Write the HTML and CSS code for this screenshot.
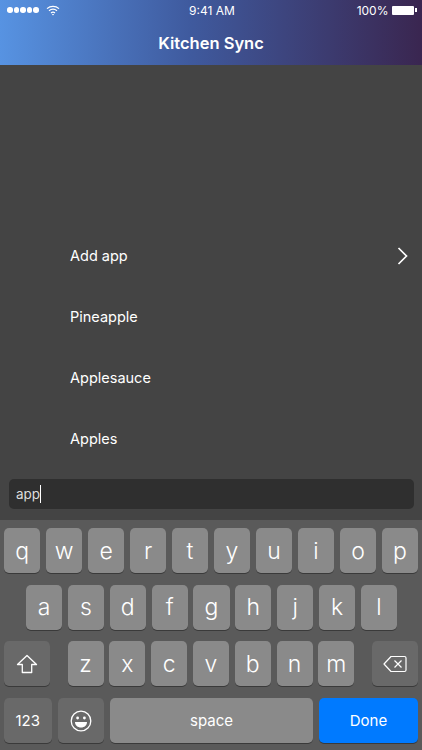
FILE: index.html
```html
<!DOCTYPE html>
<html lang="en">
<head>
  <meta charset="UTF-8">
  <meta name="viewport" content="width=device-width, initial-scale=1.0">
  <title>Kitchen Sync</title>
  <link rel="stylesheet" href="styles.css">
</head>
<body>
  <div class="app">
    <!-- Header -->
    <header class="header">
      <div class="status-bar">
        <div class="status-left">
          <span class="signal"><i></i><i></i><i></i><i></i><i></i></span>
          <svg class="wifi" width="14" height="11" viewBox="0 0 14 11" fill="none" stroke="#fff" stroke-width="1.2">
            <path d="M1 3.6C4.4 .6 9.6 .6 13 3.6"/>
            <path d="M3 5.8C5.3 3.9 8.7 3.9 11 5.8"/>
            <path d="M5 7.9C6.2 7 7.8 7 9 7.9"/>
            <path d="M7 10.6L5.9 9.3C6.6 8.9 7.4 8.9 8.1 9.3Z" fill="#fff" stroke="none"/>
          </svg>
        </div>
        <div class="clock">9:41 AM</div>
        <div class="status-right">
          <span>100%</span>
          <span class="battery"></span>
          <span class="battery-tip"></span>
        </div>
      </div>
      <div class="title">Kitchen Sync</div>
    </header>

    <!-- Suggestions -->
    <main class="suggestions">
      <div class="suggestion">
        <span>Add app</span>
        <svg class="chevron" width="11" height="18" viewBox="0 0 11 18" fill="none" stroke="#fff" stroke-width="1.7">
          <path d="M1.5 1L9.5 9L1.5 17"/>
        </svg>
      </div>
      <div class="suggestion"><span>Pineapple</span></div>
      <div class="suggestion"><span>Applesauce</span></div>
      <div class="suggestion"><span>Apples</span></div>
    </main>

    <!-- Search box -->
    <div class="input-bar">
      <div class="input"><span>app</span><span class="caret"></span></div>
    </div>

    <!-- Keyboard -->
    <div class="keyboard">
      <div class="key-row">
        <div class="key">q</div><div class="key">w</div><div class="key">e</div><div class="key">r</div><div class="key">t</div>
        <div class="key">y</div><div class="key">u</div><div class="key">i</div><div class="key">o</div><div class="key">p</div>
      </div>
      <div class="key-row row-middle">
        <div class="key">a</div><div class="key">s</div><div class="key">d</div><div class="key">f</div><div class="key">g</div>
        <div class="key">h</div><div class="key">j</div><div class="key">k</div><div class="key">l</div>
      </div>
      <div class="key-row row-third">
        <div class="key key-dark key-side">
          <svg width="22" height="20" viewBox="0 0 22 20" fill="none" stroke="#fff" stroke-width="1.3" stroke-linejoin="round">
            <path d="M11 1.5L20.5 10.5H15.7V18.5H6.3V10.5H1.5Z"/>
          </svg>
        </div>
        <div class="letters">
          <div class="key">z</div><div class="key">x</div><div class="key">c</div><div class="key">v</div>
          <div class="key">b</div><div class="key">n</div><div class="key">m</div>
        </div>
        <div class="key key-dark key-side">
          <svg width="24" height="18" viewBox="0 0 24 18" fill="none" stroke="#fff" stroke-width="1.2" stroke-linejoin="round">
            <path d="M8 1.5H21.5C22.3 1.5 23 2.2 23 3V15C23 15.8 22.3 16.5 21.5 16.5H8L1 9Z"/>
            <path d="M11.5 5.5L18.5 12.5M18.5 5.5L11.5 12.5"/>
          </svg>
        </div>
      </div>
      <div class="key-row row-bottom">
        <div class="key key-dark key-num">123</div>
        <div class="key key-dark key-emoji">
          <svg width="22" height="22" viewBox="0 0 22 22" fill="none" stroke="#fff" stroke-width="1.3">
            <circle cx="11" cy="11" r="9.8"/>
            <circle cx="7.6" cy="8" r="1.4" fill="#fff" stroke="none"/>
            <circle cx="14.4" cy="8" r="1.4" fill="#fff" stroke="none"/>
            <path d="M5 12H17C17 15.4 14.4 17.5 11 17.5C7.6 17.5 5 15.4 5 12Z" fill="#fff" stroke="none"/>
          </svg>
        </div>
        <div class="key key-space">space</div>
        <div class="key key-done">Done</div>
      </div>
    </div>
  </div>
</body>
</html>
```

FILE: styles.css
```css
/* General Styling */
body {
  margin: 0;
  padding: 0;
  font-family: Inter, 'Liberation Sans', sans-serif;
  color: #fff;
  background: #444444;
}

.app {
  width: 422px;
  height: 750px;
  display: flex;
  flex-direction: column;
  overflow: hidden;
}

/* Header */
.header {
  height: 65px;
  flex-shrink: 0;
  background: linear-gradient(90deg, #5793e2, #3f5a9e 45%, #3a2650);
}

.status-bar {
  height: 20px;
  padding: 0 5px 0 7px;
  display: flex;
  align-items: center;
  justify-content: space-between;
  font-size: 12px;
}

.status-left {
  width: 120px;
  display: flex;
  align-items: center;
  gap: 7px;
}

.signal {
  display: flex;
  gap: 1px;
}

.signal i {
  width: 5.5px;
  height: 5.5px;
  border-radius: 50%;
  background: #fff;
}

.status-right {
  width: 120px;
  display: flex;
  align-items: center;
  justify-content: flex-end;
}

.battery {
  width: 22px;
  height: 9px;
  margin-left: 4px;
  border-radius: 1px;
  background: #fff;
}

.battery-tip {
  width: 1.5px;
  height: 4px;
  margin-left: 1px;
  background: #fff;
}

.title {
  margin-top: 13px;
  text-align: center;
  font-size: 16.5px;
  font-weight: 600;
}

/* Suggestions */
.suggestions {
  flex: 1;
  display: flex;
  flex-direction: column;
  justify-content: flex-end;
}

.suggestion {
  height: 61px;
  padding: 0 14px 0 70px;
  display: flex;
  align-items: center;
  justify-content: space-between;
  font-size: 14.5px;
}

/* Search box */
.input-bar {
  height: 51px;
  flex-shrink: 0;
  box-sizing: border-box;
  padding: 10px 8px 0 9px;
}

.input {
  height: 30px;
  padding-left: 7px;
  display: flex;
  align-items: center;
  border-radius: 5px;
  background: #2f2f2f;
  color: #ddd;
  font-size: 13.5px;
}

.caret {
  width: 1px;
  height: 18px;
  background: #fff;
}

/* Keyboard */
.keyboard {
  height: 230px;
  flex-shrink: 0;
  box-sizing: border-box;
  padding: 8px 4px 0;
  display: flex;
  flex-direction: column;
  gap: 11.7px;
  background: #5a5a5a;
}

.key-row {
  height: 45px;
  display: flex;
  gap: 5.8px;
}

.row-middle {
  padding: 0 21px 0 22px;
}

.row-third {
  justify-content: space-between;
}

.row-bottom {
  gap: 6px;
}

.letters {
  display: flex;
  gap: 5.8px;
}

.key {
  flex: 1;
  display: flex;
  align-items: center;
  justify-content: center;
  border-radius: 5px;
  background: #8a8a8a;
  box-shadow: 0 1px 0 #3a3a3a;
  font-size: 23px;
  font-weight: 300;
}

.letters .key {
  flex: none;
  width: 36px;
}

.key-dark {
  background: #696969;
}

.key-side {
  flex: none;
  width: 46px;
}

.key-num {
  flex: none;
  width: 47.5px;
  font-size: 15px;
  font-weight: 400;
}

.key-emoji {
  flex: none;
  width: 46.5px;
}

.key-space {
  flex: none;
  width: 203px;
  font-size: 15px;
  font-weight: 400;
}

.key-done {
  flex: none;
  width: 99px;
  background: #007aff;
  font-size: 15px;
  font-weight: 400;
}
```
